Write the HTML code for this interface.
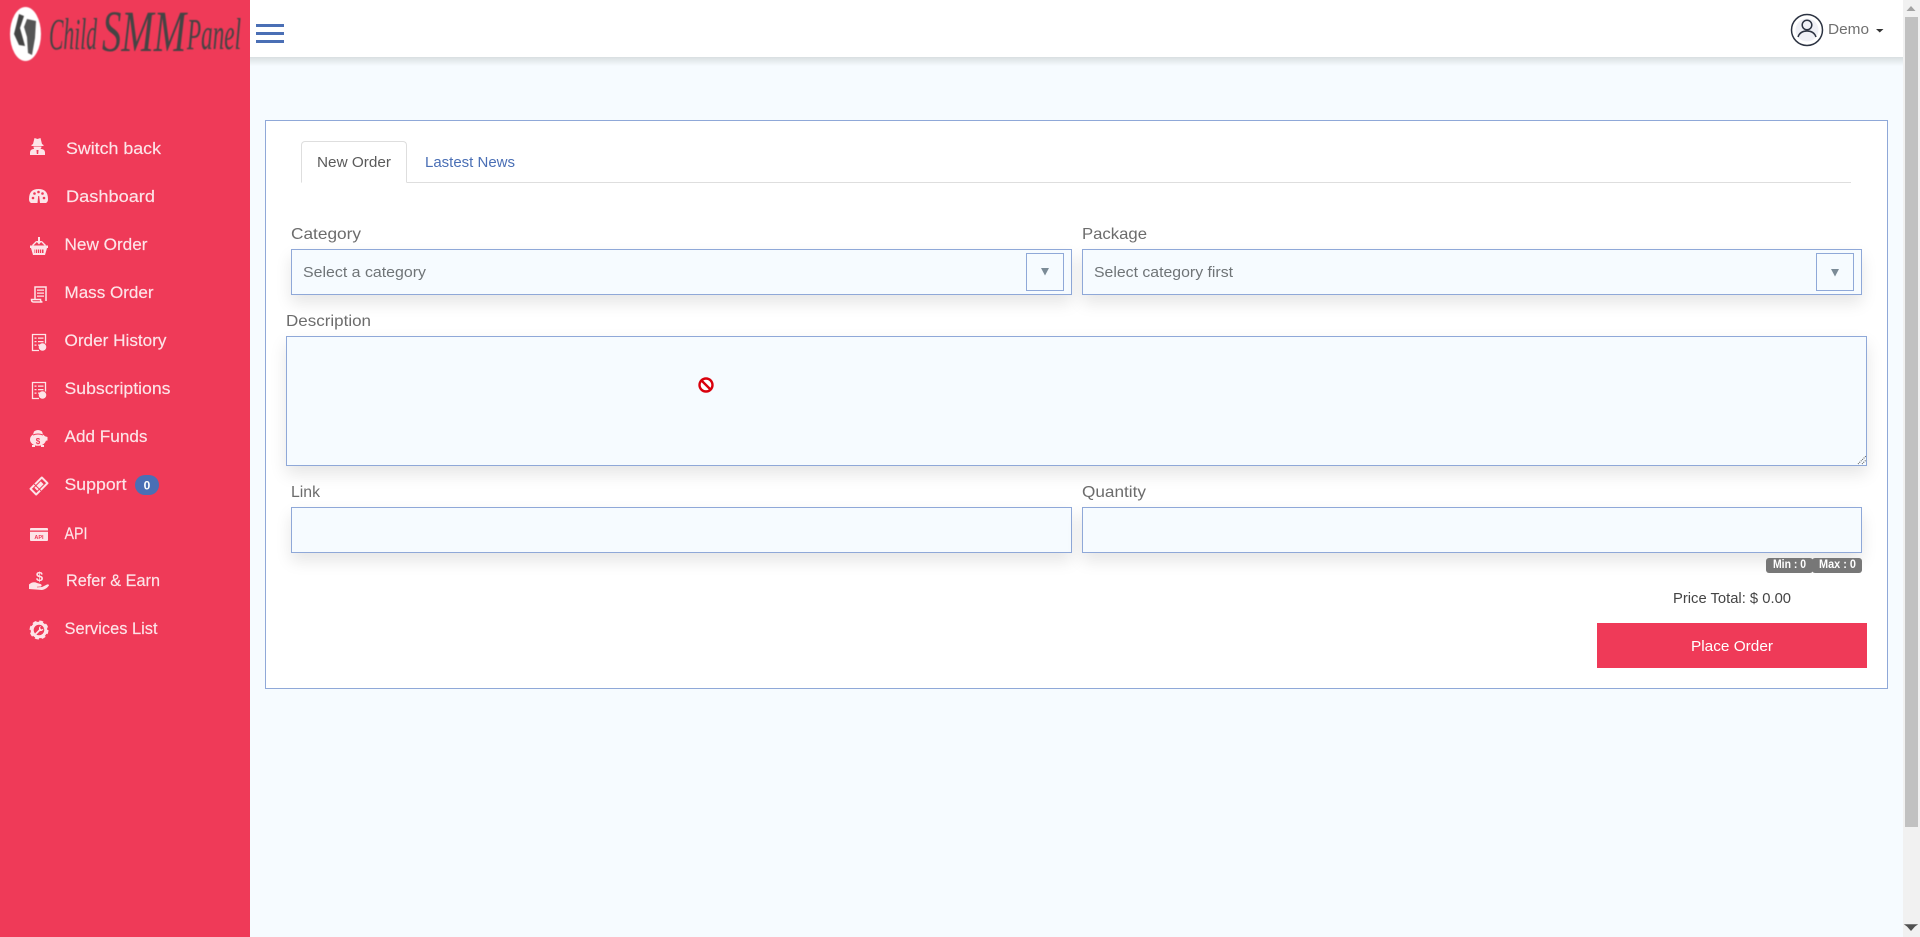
<!DOCTYPE html>
<html lang="en">
<head>
<meta charset="utf-8">
<title>New Order - Child SMM Panel</title>
<style>
html,body{margin:0;padding:0;width:1920px;height:937px;overflow:hidden;background:#f6fbff;font-family:"Liberation Sans",sans-serif}
div{position:absolute;box-sizing:border-box}
#side{left:0;top:0;width:250px;height:937px;background:#ef3a58}
#head{left:250px;top:0;width:1653px;height:57px;background:#fff}
#hshadow{left:250px;top:57px;width:1653px;height:9px;background:linear-gradient(#d9dfe1,#f6fbff)}
#track{left:1903px;top:0;width:17px;height:937px;background:#f1f1f1}
#thumb{left:1905px;top:17px;width:13px;height:810px;background:#c1c1c1}
#card{left:265px;top:120px;width:1623px;height:569px;background:#fff;border:1px solid #8fa8d8}
.tabline{left:301px;top:182px;width:1550px;height:1px;background:#dedede}
#tab{left:301px;top:141px;width:106px;height:42px;background:#fff;border:1px solid #dedede;border-bottom:1px solid #fff;border-radius:4px 4px 0 0}
.f{background:#f6fbff;border:1px solid #8fa8d8;box-shadow:0 8px 16px rgba(0,0,0,.10)}
.ab{background:#f6fbff;border:1px solid #8fa8d8}
.bd{background:#777;border-radius:3px;top:558px;height:15px}
#btn{left:1597px;top:623px;width:270px;height:45px;background:#ef3a58}
#bar1,#bar2,#bar3{left:256px;width:28px;height:3px;background:#4a6fb5}
#sb{left:135px;top:475px;width:24px;height:20px;border-radius:10px;background:#4a6fb5}
svg{position:absolute;left:0;top:0;pointer-events:none}
text{font-family:"Liberation Sans",sans-serif}
.m{fill:#fde4e8;font-size:16.5px;stroke:#fde4e8;stroke-width:.15px}
.g{fill:#6c6c6c;font-size:16px}
.s{fill:#6f7477;font-size:15px}
.l{font-family:"Liberation Serif",serif;font-style:italic;fill:#444}
</style>
</head>
<body>
<div id="side"></div>
<div id="head"></div>
<div id="hshadow"></div>
<div id="bar1" style="top:24px"></div>
<div id="bar2" style="top:32px"></div>
<div id="bar3" style="top:40px"></div>
<div id="track"></div>
<div id="thumb"></div>
<div id="card"></div>
<div class="tabline"></div>
<div id="tab"></div>
<div class="f" style="left:291px;top:249px;width:781px;height:46px"></div>
<div class="ab" style="left:1026px;top:253px;width:38px;height:38px"></div>
<div class="f" style="left:1082px;top:249px;width:780px;height:46px"></div>
<div class="ab" style="left:1816px;top:253px;width:38px;height:38px"></div>
<div class="f" style="left:286px;top:336px;width:1581px;height:130px"></div>
<div class="f" style="left:291px;top:507px;width:781px;height:46px"></div>
<div class="f" style="left:1082px;top:507px;width:780px;height:46px"></div>
<div class="bd" style="left:1766px;width:47px"></div>
<div class="bd" style="left:1812px;width:50px"></div>
<div id="btn"></div>
<div id="sb"></div>

<svg width="1920" height="937" viewBox="0 0 1920 937" xmlns="http://www.w3.org/2000/svg">
<!-- logo -->
<g style="filter:blur(.5px)">
<ellipse cx="25.500" cy="34" rx="15.500" ry="27" fill="#fff"/>
<path d="M19 14l5 2-4 12 5 18-6-1-5-11z" fill="#444"/>
<path d="M27 19l9 2-1 17-3 17-4-2-1-16-3-10z" fill="#555"/>
<text class="l" x="49" y="49" font-size="44" textLength="48" lengthAdjust="spacingAndGlyphs">Child</text>
<text class="l" x="102" y="51" font-size="58" textLength="84" lengthAdjust="spacingAndGlyphs">SMM</text>
<text class="l" x="187" y="49" font-size="44" textLength="54" lengthAdjust="spacingAndGlyphs">Panel</text>
</g>

<!-- menu text -->
<text class="m" x="66" y="154" textLength="95" lengthAdjust="spacingAndGlyphs">Switch back</text>
<text class="m" x="66" y="202" textLength="89" lengthAdjust="spacingAndGlyphs">Dashboard</text>
<text class="m" x="64.500" y="250" textLength="83" lengthAdjust="spacingAndGlyphs">New Order</text>
<text class="m" x="64.500" y="298" textLength="89" lengthAdjust="spacingAndGlyphs">Mass Order</text>
<text class="m" x="64.500" y="346" textLength="102" lengthAdjust="spacingAndGlyphs">Order History</text>
<text class="m" x="64.500" y="394" textLength="106" lengthAdjust="spacingAndGlyphs">Subscriptions</text>
<text class="m" x="64.500" y="442" textLength="83" lengthAdjust="spacingAndGlyphs">Add Funds</text>
<text class="m" x="64.500" y="490" textLength="62" lengthAdjust="spacingAndGlyphs">Support</text>
<text x="147" y="489.500" font-size="12" font-weight="700" fill="#fff" text-anchor="middle">0</text>
<text class="m" x="64.500" y="539" textLength="23" lengthAdjust="spacingAndGlyphs">API</text>
<text class="m" x="66" y="586" textLength="94" lengthAdjust="spacingAndGlyphs">Refer &amp; Earn</text>
<text class="m" x="64.500" y="634" textLength="93" lengthAdjust="spacingAndGlyphs">Services List</text>

<!-- menu icons -->
<g fill="#fde4e8">
<!-- spy -->
<path d="M33 144l1.500-6 3 1 3-1 1.500 6 1.500 1v1H31.500v-1z"/>
<path d="M33.500 146.500h8q0 3-4 3.500t-4-3.500z"/>
<path d="M30 155v-2.500q0-3 3.500-3.500h8q3.500.5 3.500 3.500v2.500z"/>
<path d="M36.500 150h2l-.3 4h-1.400z" fill="#ef3a58"/>
<!-- dashboard -->
<path d="M31 203q-2-1-2-4 0-10 9.500-10t9.500 10q0 3-2 4z"/>
<g fill="#ef3a58"><circle cx="33" cy="198" r="1.300"/><circle cx="34.500" cy="193.500" r="1.300"/><circle cx="38.500" cy="192" r="1.300"/><circle cx="42.500" cy="193.500" r="1.300"/><circle cx="44" cy="198" r="1.300"/><path d="M37.500 203l.7-7h1l.8 7z"/></g>
<!-- basket -->
<path d="M30 245.500h18v2.500h-1l-2 7H33l-2-7h-1z"/>
<path d="M32.500 245.500l4-4M45.500 245.500l-4-4" stroke="#fde4e8" stroke-width="1.300" fill="none"/>
<path d="M38 237h2v4h2l-3 3.500-3-3.500h2z"/>
<path d="M34.500 249.500h9v3.500h-9z" fill="#ef3a58"/>
<path d="M35.500 249.500v3.500M37.500 249.500v3.500M39.500 249.500v3.500M41.500 249.500v3.500" stroke="#fde4e8" stroke-width=".8" fill="none"/>
<!-- mass order -->
<g fill="none" stroke="#fde4e8" stroke-width="1.500"><path d="M35 299V287h11v14"/><path d="M31.500 299.500h9q0 2.500 2 2.500h-9q-2 0-2-2.500z"/></g>
<path d="M37 289.500h7v1.300h-7zM37 292.500h7v1.300h-7zM37 295.500h7v1.300h-7z"/>
<!-- order history / subscriptions -->
<g><path d="M39 350.500h-6.500V334.500h13v9" fill="none" stroke="#fde4e8" stroke-width="1.300"/><path d="M34.500 337.500h2v1.200h-2zM38 337.500h5.500v1.200H38zM34.500 341h2v1.200h-2zM38 341h5.500v1.200H38zM34.500 344.500h2v1.200h-2zM38 344.500h2v1.200h-2z"/><circle cx="42.500" cy="347" r="3.800"/></g>
<g><path d="M39 398.500h-6.500V382.500h13v9" fill="none" stroke="#fde4e8" stroke-width="1.300"/><path d="M34.500 385.500h2v1.200h-2zM38 385.500h5.500v1.200H38zM34.500 389h2v1.200h-2zM38 389h5.500v1.200H38zM34.500 392.500h2v1.200h-2zM38 392.500h2v1.200h-2z"/><circle cx="42.500" cy="395" r="3.800"/></g>
<!-- piggy -->
<ellipse cx="38" cy="439.500" rx="8" ry="6.300"/>
<path d="M32 445h3v2h-3zM41 445h3v2h-3zM44 436l3.500 1v3.500l-3 .5z"/>
<path d="M34 431.500q4-3 8 0l1 3h-10z"/>
<path d="M33 435q5-2 10 0" fill="none" stroke="#ef3a58" stroke-width="1"/>
<text x="38" y="444" font-size="8" font-weight="700" fill="#ef3a58" text-anchor="middle">$</text>
<!-- ticket -->
<g transform="rotate(-45 39 486)"><rect x="30" y="481" width="18" height="10" rx="1"/><rect x="32" y="483" width="14" height="6" fill="#ef3a58"/><rect x="34.500" y="484" width="9" height="4"/><path d="M37 481v10" stroke="#ef3a58" stroke-width="1"/></g>
<!-- api -->
<rect x="30" y="528" width="18" height="13" rx="1"/>
<rect x="30" y="530.500" width="18" height="1.300" fill="#ef3a58"/>
<text x="39" y="539" font-size="5.500" font-weight="700" fill="#ef3a58" text-anchor="middle">API</text>
<!-- refer -->
<text x="39.500" y="581" font-size="13" font-weight="700" fill="#fde4e8" text-anchor="middle">$</text>
<path d="M29 589v-4.500q4-3.500 8-1.500l3.500 1q2 1 .5 2.500l-4 .3 0 .6 5-.4 5-2.500q2-.5 2 1-3 4-7 4.500z"/>
<!-- gear -->
<circle cx="39" cy="630" r="6.800" fill="none" stroke="#fde4e8" stroke-width="3"/>
<circle cx="39" cy="630" r="8.600" fill="none" stroke="#fde4e8" stroke-width="1.800" stroke-dasharray="4 2.750"/>
<path d="M35 633.500l4-4q-.5-3 2-3.500l-1 2 1.500 1.500 2-1q-.5 3-3.500 2.500l-4 4z"/>
</g>

<!-- header user -->
<circle cx="1807" cy="30" r="15.500" fill="#fff" stroke="#2c3342" stroke-width="1.500"/>
<circle cx="1807" cy="30" r="11.500" fill="#eff0f6"/>
<circle cx="1807" cy="25" r="4.800" fill="none" stroke="#2c3342" stroke-width="1.500"/>
<path d="M1798 37q2-6 9-6t9 6" fill="none" stroke="#2c3342" stroke-width="1.500"/>
<text x="1828" y="34" font-size="15" fill="#707070" textLength="41" lengthAdjust="spacingAndGlyphs">Demo</text>
<path d="M1876 29h7.500l-3.750 3.500z" fill="#333"/>

<!-- scrollbar arrows -->
<path d="M1911 6l4.500 5h-9z" fill="#a3a3a3"/>
<path d="M1911 931l-4-4.500-3.200-2.200h14.400l-3.200 2.200z" fill="#505050"/>

<!-- tabs -->
<text x="317" y="167" font-size="15" fill="#5a5a5a" textLength="74" lengthAdjust="spacingAndGlyphs">New Order</text>
<text x="425" y="167" font-size="15" fill="#4a6fb5" textLength="90" lengthAdjust="spacingAndGlyphs">Lastest News</text>

<!-- form labels -->
<text class="g" x="291" y="239" textLength="70" lengthAdjust="spacingAndGlyphs">Category</text>
<text class="s" x="303" y="277" textLength="123" lengthAdjust="spacingAndGlyphs">Select a category</text>
<path d="M1041 268h8l-4 7.500z" fill="#7b8b97"/>
<text class="g" x="1082" y="239" textLength="65" lengthAdjust="spacingAndGlyphs">Package</text>
<text class="s" x="1094" y="277" textLength="139" lengthAdjust="spacingAndGlyphs">Select category first</text>
<path d="M1831 269h8l-4 7.500z" fill="#7b8b97"/>
<text class="g" x="286" y="326" textLength="85" lengthAdjust="spacingAndGlyphs">Description</text>
<text class="g" x="291" y="497" textLength="29" lengthAdjust="spacingAndGlyphs">Link</text>
<text class="g" x="1082" y="497" textLength="64" lengthAdjust="spacingAndGlyphs">Quantity</text>

<!-- resize grip -->
<path d="M1858 464l8-8M1862 464l4-4" stroke="#555" stroke-width="1" stroke-dasharray="1 1" fill="none"/>

<!-- no-drop cursor -->
<circle cx="706" cy="385" r="6.500" fill="#fff" stroke="#d9000c" stroke-width="2.400"/>
<path d="M701.500 380.500l9 9" stroke="#d9000c" stroke-width="2.400"/>

<!-- badges and price -->
<text x="1773" y="568" font-size="12" font-weight="700" fill="#fff" textLength="33" lengthAdjust="spacingAndGlyphs">Min : 0</text>
<text x="1819" y="568" font-size="12" font-weight="700" fill="#fff" textLength="37" lengthAdjust="spacingAndGlyphs">Max : 0</text>
<text x="1673" y="603" font-size="15" fill="#444" textLength="118" lengthAdjust="spacingAndGlyphs">Price Total: $ 0.00</text>
<text x="1691" y="651" font-size="15" fill="#fff" textLength="82" lengthAdjust="spacingAndGlyphs">Place Order</text>
</svg>
</body>
</html>
